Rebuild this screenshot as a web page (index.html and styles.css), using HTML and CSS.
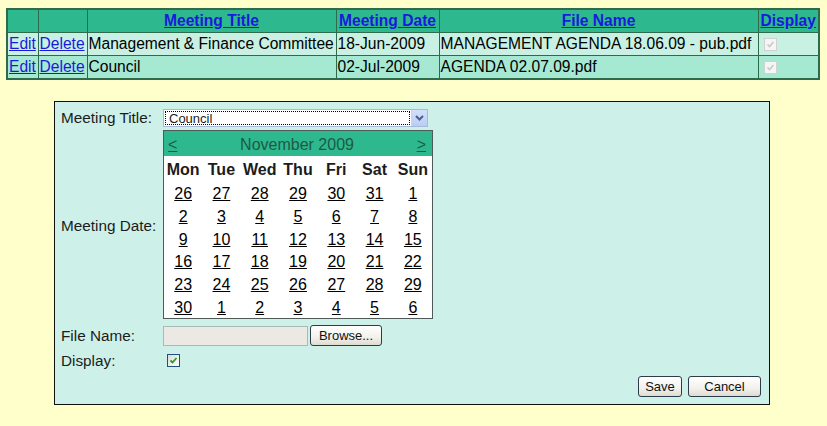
FILE: index.html
```html
<!DOCTYPE html>
<html>
<head>
<meta charset="utf-8">
<title>Meetings</title>
<link rel="stylesheet" href="styles.css">
</head>
<body>
<table class="grid">
  <colgroup>
    <col class="c1"><col class="c2"><col class="c3"><col class="c4"><col class="c5"><col class="c6">
  </colgroup>
  <thead>
    <tr>
      <th></th><th></th>
      <th><a href="#">Meeting Title</a></th>
      <th><a href="#">Meeting Date</a></th>
      <th><a href="#">File Name</a></th>
      <th><a href="#">Display</a></th>
    </tr>
  </thead>
  <tbody>
    <tr class="r1">
      <td><a href="#">Edit</a></td>
      <td><a href="#">Delete</a></td>
      <td>Management &amp; Finance Committee</td>
      <td>18-Jun-2009</td>
      <td>MANAGEMENT AGENDA 18.06.09 - pub.pdf</td>
      <td><span class="cb dis"><svg viewBox="0 0 11 11" width="11" height="11"><path d="M2.5 5.5 L4.5 7.5 L8.5 3" fill="none" stroke="#c8c8c8" stroke-width="1.6"/></svg></span></td>
    </tr>
    <tr class="r2">
      <td><a href="#">Edit</a></td>
      <td><a href="#">Delete</a></td>
      <td>Council</td>
      <td>02-Jul-2009</td>
      <td>AGENDA 02.07.09.pdf</td>
      <td><span class="cb dis"><svg viewBox="0 0 11 11" width="11" height="11"><path d="M2.5 5.5 L4.5 7.5 L8.5 3" fill="none" stroke="#c8c8c8" stroke-width="1.6"/></svg></span></td>
    </tr>
  </tbody>
</table>

<div class="panel">
  <div class="form">
    <div class="lbl l1">Meeting Title:</div>
    <div class="select">
      <span class="sel-text">Council</span>
      <span class="sel-arrow"><svg viewBox="0 0 15 16" width="15" height="16"><path d="M4 6 L7.5 9.5 L11 6" fill="none" stroke="#4d5f8a" stroke-width="2"/></svg></span>
    </div>

    <div class="lbl l2">Meeting Date:</div>
    <div class="cal">
      <div class="cal-head">
        <a href="#">&lt;</a>
        <span class="cal-title">November 2009</span>
        <a href="#">&gt;</a>
      </div>
      <div class="cal-grid">
        <b>Mon</b><b>Tue</b><b>Wed</b><b>Thu</b><b>Fri</b><b>Sat</b><b>Sun</b>
        <a href="#">26</a><a href="#">27</a><a href="#">28</a><a href="#">29</a><a href="#">30</a><a href="#">31</a><a href="#">1</a>
        <a href="#">2</a><a href="#">3</a><a href="#">4</a><a href="#">5</a><a href="#">6</a><a href="#">7</a><a href="#">8</a>
        <a href="#">9</a><a href="#">10</a><a href="#">11</a><a href="#">12</a><a href="#">13</a><a href="#">14</a><a href="#">15</a>
        <a href="#">16</a><a href="#">17</a><a href="#">18</a><a href="#">19</a><a href="#">20</a><a href="#">21</a><a href="#">22</a>
        <a href="#">23</a><a href="#">24</a><a href="#">25</a><a href="#">26</a><a href="#">27</a><a href="#">28</a><a href="#">29</a>
        <a href="#">30</a><a href="#">1</a><a href="#">2</a><a href="#">3</a><a href="#">4</a><a href="#">5</a><a href="#">6</a>
      </div>
    </div>

    <div class="lbl l3">File Name:</div>
    <div class="filerow">
      <span class="file"></span>
      <span class="btn browse">Browse...</span>
    </div>

    <div class="lbl l4">Display:</div>
    <div class="disp">
      <span class="cb on"><svg viewBox="0 0 11 11" width="11" height="11"><path d="M2.5 5.5 L4.5 7.5 L8.5 3" fill="none" stroke="#21a121" stroke-width="1.8"/></svg></span>
    </div>
  </div>
  <div class="actions">
    <span class="btn save">Save</span>
    <span class="btn cancel">Cancel</span>
  </div>
</div>
</body>
</html>
```

FILE: styles.css
```css
body {
  margin: 0;
  padding: 8px 0 0 6px;
  background: #ffffcc;
  font-family: "Liberation Sans", Arial, sans-serif;
  color: #000;
}

/* ---------- data grid ---------- */
.grid {
  border-collapse: collapse;
  table-layout: fixed;
  width: 812px;
  font-size: 15.6px;
  border: 2px solid #2e6a4c;
}
.c1 { width: 31px; }
.c2 { width: 49px; }
.c3 { width: 249px; }
.c4 { width: 103px; }
.c5 { width: 319px; }
.c6 { width: 61px; }

.grid th,
.grid td {
  border: 1px solid #2e6a4c;
  padding: 0 1px;
  height: 22px;
  white-space: nowrap;
  overflow: hidden;
  text-align: left;
}
.grid th {
  background: #2eb88e;
  text-align: center;
  font-weight: bold;
}
.grid a { color: #1a1adc; }
.grid .r1 td { background: #c9f1e3; }
.grid .r2 td { background: #a6e9d3; }
.grid td:nth-child(6) { padding-left: 5px; }

.cb {
  display: inline-flex;
  align-items: center;
  justify-content: center;
  width: 11px;
  height: 11px;
  vertical-align: middle;
}
.cb.dis {
  border: 1px solid #cfd3d0;
  background: #f4f5f4;
}
.cb.on {
  border: 1px solid #1c5180;
  background: linear-gradient(135deg, #dcdcd6, #ffffff);
}

/* ---------- edit panel ---------- */
.panel {
  box-sizing: border-box;
  width: 716px;
  margin: 21px 0 0 48px;
  background: #cdf1e9;
  border: 1px solid #111;
  padding: 7px 8px 7px 6px;
  font-size: 15.3px;
  color: #1c1c1c;
}
.form {
  display: grid;
  grid-template-columns: 102px 1fr;
  grid-template-rows: 18px 192px 27px 23px;
}
.lbl { white-space: nowrap; }
.l1 { align-self: center; }
.l2 { align-self: center; padding-top: 6px; }
.l3 { align-self: end; line-height: 21px; }
.l4 { align-self: end; line-height: 17px; }

.select {
  box-sizing: border-box;
  width: 265px;
  height: 18px;
  display: flex;
  align-items: stretch;
  background: #fff;
  border: 1px solid #a5b9d8;
}
.sel-text {
  flex: 1;
  border: 1px dotted #000;
  margin: 1px;
  font-size: 13px;
  line-height: 13px;
  padding-left: 3px;
  display: flex;
  align-items: center;
}
.sel-arrow {
  width: 15px;
  display: flex;
  align-items: center;
  justify-content: center;
  background: linear-gradient(#d3e0fb, #b9cdf6);
  border-left: 1px solid #c6d4f1;
}

.cal {
  box-sizing: border-box;
  align-self: end;
  width: 270px;
  height: 189px;
  background: #fff;
  border: 1px solid #4e5a55;
  display: flex;
  flex-direction: column;
  font-size: 16px;
}
.cal-head {
  height: 25px;
  background: #2eb88e;
  display: flex;
  align-items: center;
  justify-content: space-between;
  padding: 3px 6px 0 4px;
  box-sizing: border-box;
  color: #1d5a45;
}
.cal-head a { color: #1d5a45; }
.cal-grid {
  flex: 1;
  display: grid;
  grid-template-columns: repeat(7, 1fr);
  grid-template-rows: 25px repeat(6, 1fr);
  align-items: center;
  text-align: center;
}
.cal-grid b { font-weight: bold; padding-top: 2px; }
.cal-grid a { color: #000; padding-top: 3px; }

.filerow {
  align-self: end;
  display: flex;
  align-items: center;
  gap: 2px;
  height: 21px;
}
.file {
  box-sizing: border-box;
  width: 145px;
  height: 20px;
  margin-top: 1px;
  background: #ece9e4;
  border: 1px solid #a7b9b9;
}
.btn {
  box-sizing: border-box;
  display: inline-flex;
  align-items: center;
  justify-content: center;
  height: 21px;
  border: 1px solid #2d3b4a;
  border-radius: 3px;
  background: linear-gradient(#ffffff, #f2f1ec 60%, #dedbd1);
  font-size: 13px;
  color: #111;
}
.browse { width: 72px; }
.disp {
  align-self: end;
  height: 17px;
  display: flex;
  align-items: center;
  padding-left: 4px;
}

.actions {
  display: flex;
  justify-content: flex-end;
  gap: 6px;
  margin-top: 7px;
}
.save { width: 44px; }
.cancel { width: 73px; }
```
